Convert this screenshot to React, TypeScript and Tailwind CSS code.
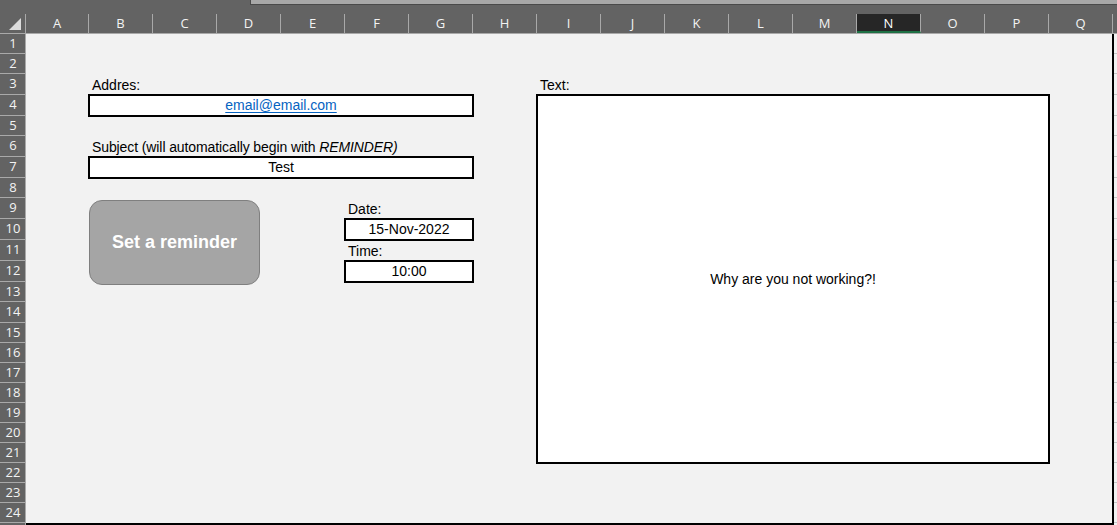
import React from "react";

const columns = ["A", "B", "C", "D", "E", "F", "G", "H", "I", "J", "K", "L", "M", "N", "O", "P", "Q"];
const rowHeights = [20, 20, 21, 21, 20, 21, 21, 20, 21, 21, 21, 21, 20, 21, 20, 20, 20, 20, 20, 20, 20, 20, 20, 20];

function Box({ className, children }: { className: string; children: React.ReactNode }) {
  return (
    <div className={`-m-px flex items-center justify-center border-2 border-black bg-white text-[14px] leading-[17px] text-black ${className}`}>
      {children}
    </div>
  );
}

function Label({ className, children }: { className: string; children: React.ReactNode }) {
  return <div className={`flex items-end pb-px pl-[3px] text-[14px] leading-[17px] text-black ${className}`}>{children}</div>;
}

export default function App() {
  return (
    <div className="flex h-[525px] w-[1117px] flex-col overflow-hidden bg-[#636363] font-['Liberation_Sans',Arial,sans-serif]">
      {/* formula bar edge */}
      <div className="flex h-[14px] shrink-0">
        <div className="w-[250px]" />
        <div className="h-[5px] flex-1 border-b border-l border-[#4a4a4a] bg-[#a8a8a8]" />
      </div>

      {/* column headers */}
      <div className="flex h-[20px] shrink-0 border-b border-[#a9a9a9] font-['Open_Sans',sans-serif] text-[13px] text-[#f3f3f3]">
        <div className="relative w-[26px] shrink-0 border-r border-[#a9a9a9]">
          <svg className="absolute left-[9px] top-[4px]" width="13" height="13" viewBox="0 0 13 13">
            <polygon points="0,12 12,12 12,0" fill="#dcdcdc" />
          </svg>
        </div>
        {columns.map((c, i) => (
          <div
            key={c}
            className={
              c === "N"
                ? "flex w-[64px] shrink-0 items-center justify-center border-b-2 border-r border-b-[#1e7145] border-r-[#a9a9a9] bg-[#262626] pt-[2px] text-white"
                : `flex shrink-0 items-center justify-center border-r border-[#a9a9a9] ${i === 0 ? "w-[63px]" : "w-[64px]"}`
            }
          >
            {c}
          </div>
        ))}
        <div className="flex-1" />
      </div>

      <div className="flex flex-1">
        {/* row headers */}
        <div className="flex w-[26px] shrink-0 flex-col border-r border-[#a9a9a9] font-['Open_Sans',sans-serif] text-[13px] text-[#f3f3f3]">
          {rowHeights.map((h, i) => (
            <div key={i} className="flex shrink-0 items-center justify-center border-b border-[#a9a9a9] pl-px" style={{ height: h }}>
              {i + 1}
            </div>
          ))}
        </div>

        {/* sheet */}
        <div className="grid h-[491px] w-[1088px] shrink-0 grid-cols-[63px_repeat(16,64px)] grid-rows-[20px_20px_21px_21px_20px_21px_21px_20px_21px_21px_21px_21px_20px_21px_20px_20px_20px_20px_20px_20px_20px_20px_20px_20px] border-b-2 border-r-2 border-black bg-[#f2f2f2]">
          <Label className="col-start-2 col-end-8 row-start-3">Addres:</Label>
          <Box className="col-start-2 col-end-8 row-start-4">
            <span className="text-[#0563c1] underline underline-offset-2">email@email.com</span>
          </Box>

          <Label className="col-start-2 col-end-9 row-start-6 whitespace-nowrap tracking-[-0.1px]">
            Subject (will automatically begin with&nbsp;<span className="italic">REMINDER)</span>
          </Label>
          <Box className="col-start-2 col-end-8 row-start-7">Test</Box>

          <div className="col-start-2 col-end-5 row-start-9 row-end-14 self-start pt-[2px]">
            <div className="flex h-[85px] w-[171px] items-center justify-center rounded-[13px] border border-[#7f7f7f] bg-[#a5a5a5] text-[18px] font-bold text-white">
              Set a reminder
            </div>
          </div>

          <Label className="col-start-6 col-end-8 row-start-9">Date:</Label>
          <Box className="col-start-6 col-end-8 row-start-10">15-Nov-2022</Box>
          <Label className="col-start-6 col-end-8 row-start-11">Time:</Label>
          <Box className="col-start-6 col-end-8 row-start-12">10:00</Box>

          <Label className="col-start-9 col-end-12 row-start-3">Text:</Label>
          <Box className="col-start-9 col-end-17 row-start-4 row-end-22">Why are you not working?!</Box>
        </div>

        {/* next column sliver */}
        <div className="flex flex-1 flex-col bg-[#f2f2f2]">
          {rowHeights.map((h, i) => (
            <div key={i} className="shrink-0 border-b border-[#c6c6c6]" style={{ height: h }} />
          ))}
        </div>
      </div>
    </div>
  );
}
